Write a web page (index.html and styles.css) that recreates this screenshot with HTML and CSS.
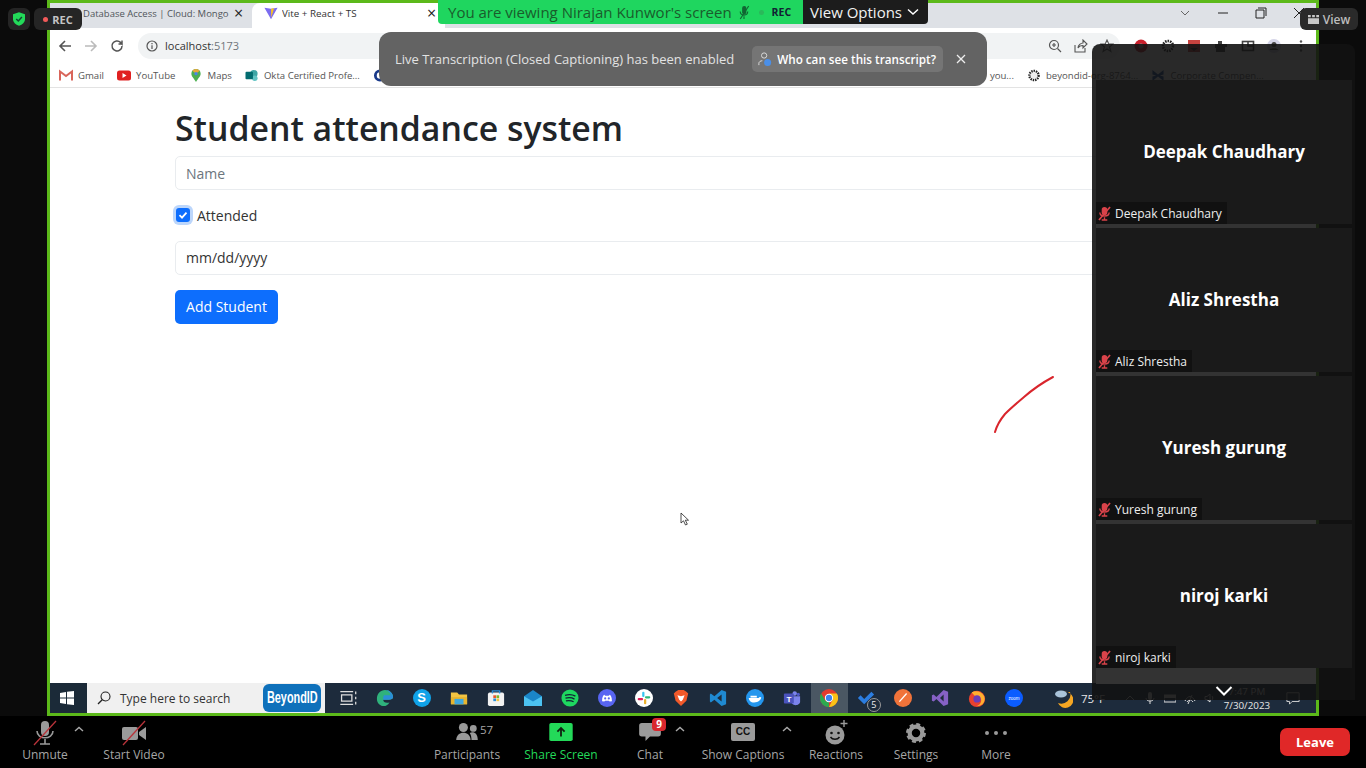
FILE: index.html
```html
<!DOCTYPE html>
<html lang="en">
<head>
  <meta charset="UTF-8" />
  <title>Zoom Meeting</title>
  <link rel="stylesheet" href="styles.css">
</head>
<body>
  <div class="stage">
    <div class="share">
      <!-- chrome tabs -->
      <div class="tabs">
        <div class="tab"><span class="tab-title">Database Access | Cloud: Mongo</span><span class="tab-x">×</span></div>
        <div class="tab active">
          <svg class="vite" viewBox="0 0 16 16"><path d="M0.5 2 8 3.200 15.500 2 8 15z" fill="#7b6cf0"/><path d="M8 3.200 11.500 2.600 8.300 13.500z" fill="#f7c325"/></svg>
          <span class="tab-title">Vite + React + TS</span><span class="tab-x">×</span>
        </div>
        <div class="win-ctrls">
          <svg viewBox="0 0 12 12"><path d="M2 4 6 8 10 4" fill="none" stroke="#666" stroke-width="1"/></svg>
          <svg viewBox="0 0 12 12"><path d="M1 6H11" stroke="#222" stroke-width="1"/></svg>
          <svg viewBox="0 0 12 12"><path d="M3 1H11V9M1 3H9V11H1z" fill="none" stroke="#222" stroke-width="1"/></svg>
          <svg viewBox="0 0 12 12"><path d="M1 1 11 11M11 1 1 11" stroke="#222" stroke-width="1"/></svg>
        </div>
      </div>

      <!-- address bar -->
      <div class="addr">
        <svg class="nav" viewBox="0 0 14 14"><path d="M13 7H2M7 2 2 7l5 5" fill="none" stroke="#555" stroke-width="1.600"/></svg>
        <svg class="nav" viewBox="0 0 14 14"><path d="M1 7H12M7 2l5 5-5 5" fill="none" stroke="#bbb" stroke-width="1.600"/></svg>
        <svg class="nav" viewBox="0 0 14 14"><path d="M12 7a5 5 0 1 1-1.500-3.600L12 5V1.500M12 5H8.500" fill="none" stroke="#555" stroke-width="1.500"/></svg>
        <div class="url">
          <svg class="info" viewBox="0 0 12 12"><circle cx="6" cy="6" r="5" fill="none" stroke="#555" stroke-width="1.200"/><path d="M6 5.200V9M6 3v1.200" stroke="#555" stroke-width="1.200"/></svg>
          <span class="host">localhost</span><span class="port">:5173</span>
          <span class="url-right">
            <svg viewBox="0 0 14 14"><circle cx="6" cy="6" r="4.500" fill="none" stroke="#555" stroke-width="1.200"/><path d="M9.500 9.500 13 13M4 6h4M6 4v4" stroke="#555" stroke-width="1.200"/></svg>
            <svg viewBox="0 0 14 14"><path d="M1 6v7h10V9M4 9c0-3 3-5 5-5V1l4 4-4 4V6.500C7 6.500 5 7 4 9z" fill="none" stroke="#555" stroke-width="1.100"/></svg>
            <svg viewBox="0 0 14 14"><path d="M7 1l1.800 4H13L9.600 8l1.300 4.500L7 10l-3.900 2.500L4.400 8 1 5h4.200z" fill="none" stroke="#555" stroke-width="1.100"/></svg>
          </span>
        </div>
        <div class="ext">
          <svg viewBox="0 0 14 14"><circle cx="7" cy="7" r="6.500" fill="#c8202c"/><circle cx="7" cy="7" r="2.500" fill="#999"/></svg>
          <svg viewBox="0 0 14 14"><circle cx="7" cy="7" r="5" fill="#eee" stroke="#222" stroke-width="2.500" stroke-dasharray="1.500 1"/></svg>
          <svg viewBox="0 0 14 14"><rect x="1" y="1" width="12" height="12" fill="#c8433f"/><path d="M3 9h8l-4 3z" fill="#222"/></svg>
          <svg viewBox="0 0 14 14"><path d="M1 5h3V2h4v3h5v3h-2v5H2V9H1z" fill="#444"/></svg>
          <svg viewBox="0 0 14 14"><rect x="1.500" y="2.500" width="11" height="9" fill="none" stroke="#444" stroke-width="1.600"/><path d="M7 2.500V7H12" fill="none" stroke="#444" stroke-width="1.600"/></svg>
          <svg viewBox="0 0 14 14"><circle cx="7" cy="7" r="7" fill="#d5d5e8"/><circle cx="7" cy="5.500" r="2.500" fill="#444"/><path d="M2.500 11c1-2.500 8-2.500 9 0z" fill="#444"/></svg>
          <svg viewBox="0 0 14 14"><circle cx="7" cy="2.500" r="1.200" fill="#555"/><circle cx="7" cy="7" r="1.200" fill="#555"/><circle cx="7" cy="11.500" r="1.200" fill="#555"/></svg>
        </div>
      </div>

      <!-- bookmarks -->
      <div class="marks">
        <span class="mark"><svg viewBox="0 0 14 12"><path d="M1 11V2l6 4.500L13 2v9" fill="none" stroke="#d9655a" stroke-width="2"/></svg>Gmail</span>
        <span class="mark"><svg viewBox="0 0 14 12"><rect y="1" width="14" height="10" rx="2.500" fill="#e02020"/><path d="M5.500 3.500 9.500 6l-4 2.500z" fill="#fff"/></svg>YouTube</span>
        <span class="mark"><svg viewBox="0 0 12 14"><path d="M6 14C4 10 1 8 1 5a5 5 0 0 1 10 0c0 3-3 5-5 9z" fill="#4caf50"/><path d="M2 2a5 5 0 0 1 8 0L6 5z" fill="#e9a83a"/><circle cx="6" cy="5" r="1.800" fill="#4a86e8"/></svg>Maps</span>
        <span class="mark"><svg viewBox="0 0 14 14"><circle cx="9" cy="5" r="4" fill="#3fa6a6"/><circle cx="10" cy="10" r="3" fill="#62c4c4"/><rect x="0" y="3" width="8" height="8" rx="1" fill="#036c70"/></svg>Okta Certified Profe...</span>
        <span class="mark-gap"><svg viewBox="0 0 14 14"><circle cx="7" cy="7" r="5" fill="none" stroke="#1a3a8a" stroke-width="3"/></svg></span>
        <span class="mark faint">you...</span>
        <span class="mark"><svg viewBox="0 0 14 14"><circle cx="7" cy="7" r="5" fill="#eee" stroke="#222" stroke-width="2.500" stroke-dasharray="1.500 1"/></svg>beyondid-org-8764...</span>
        <span class="mark"><svg viewBox="0 0 14 14"><path d="M1 1 7 6 13 1v5L9 7l4 1v5L7 8l-6 5V8l4-1-4-1z" fill="#1a4a9a"/></svg>Corporate Compen...</span>
      </div>

      <!-- the app being shared -->
      <main class="page">
        <h1>Student attendance system</h1>
        <input class="field" type="text" placeholder="Name">
        <label class="check">
          <span class="check-box"><svg viewBox="0 0 14 14"><path d="M3.500 7.200 6 9.600 10.500 4.600" fill="none" stroke="#fff" stroke-width="1.800"/></svg></span>
          Attended
        </label>
        <div class="field date">mm/dd/yyyy</div>
        <button class="add">Add Student</button>

        <svg class="scribble" viewBox="0 0 60 58"><path d="M1 57C3 50 6 45 11 39 17 33 23 28 30 22 38 15 46 9 59 2" fill="none" stroke="#d9252c" stroke-width="2" stroke-linecap="round"/></svg>
        <svg class="pointer" viewBox="0 0 10 14"><path d="M1 1V11L3.500 8.800 5.500 13 7.300 12.200 5.300 8.200H8.500z" fill="#fff" stroke="#222" stroke-width="0.800"/></svg>
      </main>

      <!-- windows taskbar -->
      <div class="taskbar">
        <div class="start"><svg viewBox="0 0 14 14"><path d="M0 2 6 1V6.500H0zM7 .8 14 0V6.500H7zM0 7.500H6V13L0 12zM7 7.500H14V14L7 13.200z" fill="#fff"/></svg></div>
        <div class="search">
          <svg viewBox="0 0 14 14"><circle cx="8.500" cy="5.500" r="4.500" fill="none" stroke="#222" stroke-width="1.100"/><path d="M5.200 8.800 1 13" stroke="#222" stroke-width="1.300"/></svg>
          <span class="search-text">Type here to search</span>
          <span class="beyond"><span class="beyond-text">BeyondID</span></span>
        </div>
        <div class="apps">
          <span class="app"><svg viewBox="0 0 14 14"><path d="M1 2H11M1 12H11M2 4.500H10V9.500H2zM13 2v2M13 6v2M13 10v2" fill="none" stroke="#ddd" stroke-width="1"/></svg></span>
          <span class="app"><svg viewBox="0 0 20 20"><path d="M1 11C1 5 5 1 10 1c5.500 0 9 4 9 8 0 2-2 3-5 3H8c0 3 3 4 7 3-2 3-4 4-6 4-4 0-8-3-8-8z" fill="#2fb27c"/><path d="M8 12h6c3 0 5-1 5-3 0-4-3.500-8-9-8 4 1 6 3 6 6H9c-1 1-1 3-1 5z" fill="#2b8fd8"/></svg></span>
          <span class="app"><span class="disc sky">S</span></span>
          <span class="app"><svg viewBox="0 0 20 20"><path d="M1 4H8L10 6H19V17H1z" fill="#f4c542"/><rect x="1" y="9" width="18" height="8" fill="#e8b52f"/><rect x="5" y="11" width="10" height="6" fill="#3fa9e0"/></svg></span>
          <span class="app"><svg viewBox="0 0 20 20"><rect x="1" y="4" width="18" height="15" rx="2" fill="#f2f2f2"/><path d="M6 5V2h8v3" fill="none" stroke="#2b8fd8" stroke-width="1.500"/><rect x="7" y="7" width="3" height="3" fill="#e8572f"/><rect x="10.500" y="7" width="3" height="3" fill="#7ab82f"/><rect x="7" y="10.500" width="3" height="3" fill="#2b8fd8"/><rect x="10.500" y="10.500" width="3" height="3" fill="#f4c542"/></svg></span>
          <span class="app"><svg viewBox="0 0 20 20"><path d="M0 8 10 1 20 8V19H0z" fill="#1b86c8"/><path d="M0 8 10 14 20 8V19H0z" fill="#4cc2f1"/></svg></span>
          <span class="app"><svg viewBox="0 0 20 20"><circle cx="10" cy="10" r="9.500" fill="#1ed760"/><path d="M4.500 7C8 6 12.500 6 16 8M5 10.200c3-.8 7-.7 10 1M5.500 13.200c3-.6 6-.4 8.500 1" fill="none" stroke="#123" stroke-width="1.500"/></svg></span>
          <span class="app"><svg viewBox="0 0 20 20"><circle cx="10" cy="10" r="10" fill="#5865f2"/><path d="M4.500 13.500C4.500 9 6 6.500 7 6.500L8 7.500H12L13 6.500C14 6.500 15.500 9 15.500 13.500L13 14 12 13H8L7 14z" fill="#fff"/><circle cx="8" cy="10.500" r="1.200" fill="#5865f2"/><circle cx="12" cy="10.500" r="1.200" fill="#5865f2"/></svg></span>
          <span class="app"><svg viewBox="0 0 20 20"><circle cx="10" cy="10" r="10" fill="#fff"/><rect x="8" y="3" width="2.500" height="6" rx="1.200" fill="#36c5f0"/><rect x="11" y="8" width="6" height="2.500" rx="1.200" fill="#2eb67d"/><rect x="10" y="11" width="2.500" height="6" rx="1.200" fill="#ecb22e"/><rect x="3" y="10" width="6" height="2.500" rx="1.200" fill="#e01e5a"/></svg></span>
          <span class="app"><svg viewBox="0 0 20 20"><path d="M4 3 7 1H13L16 3 18 5 16 13 10 19 4 13 2 5z" fill="#f1592a"/><path d="M6 7 10 8 14 7 12 12 10 14 8 12z" fill="#fff"/></svg></span>
          <span class="app"><svg viewBox="0 0 20 20"><path d="M14 1 19 3V17L14 19 6 12 2 15 1 14V6L2 5 6 8z" fill="#1f8ad2"/><path d="M14 6V14L9 10z" fill="#1f2d3d"/></svg></span>
          <span class="app"><svg viewBox="0 0 20 20"><circle cx="10" cy="10" r="10" fill="#2496ed"/><path d="M3 10H14C15 8.500 16 8.500 17 9.500 16.500 12 14 15 9 15 5 15 3.500 13 3 10z" fill="#fff"/><rect x="5" y="7.500" width="7" height="2" fill="#fff"/></svg></span>
          <span class="app"><svg viewBox="0 0 20 20"><circle cx="13" cy="5" r="2.500" fill="#7b83eb"/><circle cx="17" cy="6" r="1.800" fill="#5059c9"/><path d="M9 8H19V14C19 17 16 18 14 18 11 18 9 16 9 14z" fill="#7b83eb"/><rect x="1" y="5" width="11" height="11" rx="1" fill="#4b53bc"/><text class="teams-t" x="6.500" y="14">T</text></svg></span>
          <span class="app on"><svg viewBox="0 0 20 20"><circle cx="10" cy="10" r="10" fill="#e33b2e"/><path d="M10 20A10 10 0 0 1 1.300 5L6 13l4 2z" fill="#2da94f"/><path d="M10 20a10 10 0 0 0 8.700-15H10l4 7z" fill="#fbc116"/><circle cx="10" cy="10" r="4.600" fill="#fff"/><circle cx="10" cy="10" r="3.500" fill="#3b82f0"/></svg></span>
          <span class="app"><svg viewBox="0 0 20 20"><path d="M1 10 4 7 8 11 16 3 19 6 8 17z" fill="#2b7de0"/></svg><span class="todo-count">5</span></span>
          <span class="app"><svg viewBox="0 0 20 20"><circle cx="10" cy="10" r="10" fill="#f0733a"/><path d="M6 14 14 5" stroke="#fff" stroke-width="1.500"/></svg></span>
          <span class="app"><svg viewBox="0 0 20 20"><path d="M14 1 19 3V17L14 19 6 11 3 14 1 13V7L3 6 6 9z" fill="#8661c5"/><path d="M14 6V14L10 10z" fill="#1f2d3d"/></svg></span>
          <span class="app"><svg viewBox="0 0 20 20"><circle cx="10" cy="11" r="9" fill="#e8412f"/><path d="M4 4C8 1 15 2 18 8c2 6-2 11-8 11 5-2 6-7 3-10L8 8z" fill="#ffb02f"/><circle cx="10" cy="11" r="4" fill="#6a3db8"/></svg></span>
          <span class="app"><svg viewBox="0 0 20 20"><circle cx="10" cy="10" r="10" fill="#0b5cff"/><text class="zoom-t" x="10" y="12">zoom</text></svg></span>
        </div>
        <div class="weather">
          <svg viewBox="0 0 20 20"><path d="M9 3A8 8 0 1 1 3 14 9 9 0 0 0 15 3z" transform="translate(2 1)" fill="#f5a623"/><ellipse cx="8" cy="6" rx="6" ry="3.500" fill="#a9c3d9"/></svg>
          <span>75°F</span>
        </div>
        <div class="tray">
          <svg viewBox="0 0 12 12"><path d="M2 8 6 4 10 8" fill="none" stroke="#ddd" stroke-width="1"/></svg>
          <svg viewBox="0 0 12 12"><rect x="4" y="0" width="4" height="8" rx="2" fill="#ddd"/><path d="M2 6c0 4 8 4 8 0M6 9v3" fill="none" stroke="#ddd" stroke-width="1"/></svg>
          <svg viewBox="0 0 12 12"><rect x="0" y="3" width="12" height="7" fill="none" stroke="#ddd" stroke-width="1"/><rect x="0" y="3" width="12" height="3" fill="#ddd"/></svg>
          <svg viewBox="0 0 12 12"><path d="M1 9C4 3 8 3 11 9M3 10C5 7 7 7 9 10M8 3 4 12" fill="none" stroke="#ddd" stroke-width="1"/></svg>
          <svg viewBox="0 0 12 12"><path d="M1 4.500H3L6 2V10L3 7.500H1z" fill="none" stroke="#ddd" stroke-width="1"/><path d="M8 4c1 1 1 3 0 4" fill="none" stroke="#ddd" stroke-width="1"/></svg>
        </div>
        <div class="clock">
          <span class="time">7:47 PM</span>
          <span class="day">7/30/2023</span>
        </div>
        <svg class="notif" viewBox="0 0 16 16"><path d="M1 2H15V12H7L4 15V12H1z" fill="none" stroke="#ddd" stroke-width="1"/></svg>
      </div>
    </div>

    <!-- zoom overlays -->
    <div class="secure">
      <span class="pill shield"><svg viewBox="0 0 14 16"><path d="M7 0 14 2.500V8C14 12 11 14.500 7 16 3 14.500 0 12 0 8V2.500z" fill="#23d959"/><path d="M3.800 8 6.200 10.400 10.400 5.800" fill="none" stroke="#143" stroke-width="1.700"/></svg></span>
      <span class="pill rec"><i class="rec-dot"></i>REC</span>
    </div>

    <div class="banner">
      <span class="banner-text">You are viewing Nirajan Kunwor's screen<svg class="mic-mini" viewBox="0 0 12 16"><rect x="4" y="1" width="4.500" height="9" rx="2.200" fill="#163"/><path d="M2 7c0 5 8 5 8 0M6 12v3" fill="none" stroke="#163" stroke-width="1.200"/><path d="M11 1 2 15" stroke="#163" stroke-width="1.200"/></svg><i class="banner-dot"></i><b>REC</b></span>
      <span class="banner-view">View Options
        <svg viewBox="0 0 12 8"><path d="M1 1.500 6 6l5-4.500" fill="none" stroke="#fff" stroke-width="1.500"/></svg>
      </span>
    </div>

    <div class="toast">
      <span>Live Transcription (Closed Captioning) has been enabled</span>
      <span class="toast-btn">
        <svg viewBox="0 0 16 18"><circle cx="7" cy="5" r="3" fill="none" stroke="#ddd" stroke-width="1.100"/><path d="M1 16v-2c0-2 2-3 4-3" fill="none" stroke="#ddd" stroke-width="1.100"/><circle cx="11" cy="13" r="4" fill="#4a8fe8"/></svg>
        Who can see this transcript?
      </span>
      <svg class="toast-x" viewBox="0 0 10 10"><path d="M1 1 9 9M9 1 1 9" stroke="#eee" stroke-width="1.300"/></svg>
    </div>

    <div class="view-btn">
      <svg viewBox="0 0 12 12"><path d="M0 1H3V3.500H0zM4.500 1H7.500V3.500H4.500zM9 1H12V3.500H9z M0 4.500H12V11H0z" fill="#c8c8c8"/></svg>
      View
    </div>

    <aside class="gallery">
      <div class="tile"><div class="tile-name">Deepak Chaudhary</div><div class="tile-tag"><svg class="mic-red" viewBox="0 0 14 16"><rect x="4" y="1" width="6" height="9" rx="3" fill="#d9434a"/><path d="M2 7c0 5 10 5 10 0M7 12v3M4 15h6" fill="none" stroke="#d9434a" stroke-width="1.500"/><path d="M13 1 1 15" stroke="#d9434a" stroke-width="1.800"/></svg>Deepak Chaudhary</div></div>
      <div class="tile-bar"></div>
      <div class="tile"><div class="tile-name">Aliz Shrestha</div><div class="tile-tag"><svg class="mic-red" viewBox="0 0 14 16"><rect x="4" y="1" width="6" height="9" rx="3" fill="#d9434a"/><path d="M2 7c0 5 10 5 10 0M7 12v3M4 15h6" fill="none" stroke="#d9434a" stroke-width="1.500"/><path d="M13 1 1 15" stroke="#d9434a" stroke-width="1.800"/></svg>Aliz Shrestha</div></div>
      <div class="tile-bar"></div>
      <div class="tile"><div class="tile-name">Yuresh gurung</div><div class="tile-tag"><svg class="mic-red" viewBox="0 0 14 16"><rect x="4" y="1" width="6" height="9" rx="3" fill="#d9434a"/><path d="M2 7c0 5 10 5 10 0M7 12v3M4 15h6" fill="none" stroke="#d9434a" stroke-width="1.500"/><path d="M13 1 1 15" stroke="#d9434a" stroke-width="1.800"/></svg>Yuresh gurung</div></div>
      <div class="tile-bar"></div>
      <div class="tile"><div class="tile-name">niroj karki</div><div class="tile-tag"><svg class="mic-red" viewBox="0 0 14 16"><rect x="4" y="1" width="6" height="9" rx="3" fill="#d9434a"/><path d="M2 7c0 5 10 5 10 0M7 12v3M4 15h6" fill="none" stroke="#d9434a" stroke-width="1.500"/><path d="M13 1 1 15" stroke="#d9434a" stroke-width="1.800"/></svg>niroj karki</div></div>
      <div class="tile-foot"></div>
      <svg class="gallery-down" viewBox="0 0 18 12"><path d="M1.500 2 9 9.500 16.500 2" fill="none" stroke="#fff" stroke-width="2"/></svg>
    </aside>
  </div>

  <!-- zoom toolbar -->
  <footer class="toolbar">
    <div class="tool w-unmute">
      <svg viewBox="0 0 26 26"><rect x="9" y="1" width="8" height="15" rx="4" fill="#9a9a9a"/><path d="M5 11c0 9 16 9 16 0M13 19v5M8 24h10" fill="none" stroke="#9a9a9a" stroke-width="1.600"/><path d="M24 1 2 25" stroke="#b8333a" stroke-width="1.300"/></svg>
      <span>Unmute</span>
      <svg class="caret" viewBox="0 0 10 6"><path d="M1 5 5 1.500 9 5" fill="none" stroke="#aaa" stroke-width="1.400"/></svg>
    </div>
    <div class="tool w-video">
      <svg viewBox="0 0 26 26"><rect x="1" y="7" width="16" height="13" rx="2" fill="#9a9a9a"/><path d="M18 12 25 7V20L18 15z" fill="#9a9a9a"/><path d="M24 1 2 25" stroke="#b8333a" stroke-width="1.300"/></svg>
      <span>Start Video</span>
    </div>
    <div class="tool w-part">
      <svg class="wide" viewBox="0 4 26 20"><circle cx="9" cy="9" r="5" fill="#9a9a9a"/><circle cx="20" cy="10" r="3.800" fill="#9a9a9a"/><path d="M1 23c0-11 16-11 16 0z" fill="#9a9a9a"/><path d="M18 23c0-3-.5-6-2-8 4-2 9 0 9 8z" fill="#9a9a9a"/></svg>
      <span>Participants</span>
      <em class="count">57</em>
    </div>
    <div class="tool w-share">
      <svg class="wide" viewBox="0 0 26 20"><rect width="26" height="20" rx="2" fill="#23d959"/><path d="M13 15V6M9 9.500 13 5.500 17 9.500" fill="none" stroke="#102010" stroke-width="2"/></svg>
      <span class="green">Share Screen</span>
    </div>
    <div class="tool w-chat">
      <svg class="bubble" viewBox="0 0 24 21"><path d="M3 0H21C23 0 24 1 24 3V12C24 14 23 15 21 15H12L7 20V15H3C1 15 0 14 0 12V3C0 1 1 0 3 0z" fill="#9a9a9a"/></svg>
      <span>Chat</span>
      <em class="badge">9</em>
      <svg class="caret" viewBox="0 0 10 6"><path d="M1 5 5 1.500 9 5" fill="none" stroke="#aaa" stroke-width="1.400"/></svg>
    </div>
    <div class="tool w-cc">
      <span class="cc">CC</span>
      <span>Show Captions</span>
      <svg class="caret" viewBox="0 0 10 6"><path d="M1 5 5 1.500 9 5" fill="none" stroke="#aaa" stroke-width="1.400"/></svg>
    </div>
    <div class="tool w-react">
      <svg viewBox="0 0 26 26"><circle cx="12" cy="15" r="9.500" fill="#9a9a9a"/><circle cx="8.500" cy="13" r="1.300" fill="#111"/><circle cx="15.500" cy="13" r="1.300" fill="#111"/><path d="M7.500 17c2 3 7 3 9 0" fill="none" stroke="#111" stroke-width="1.500"/><path d="M21 0V7M17.500 3.500H24.500" stroke="#9a9a9a" stroke-width="1.400"/></svg>
      <span>Reactions</span>
    </div>
    <div class="tool w-set">
      <svg class="gear" viewBox="0 0 26 26"><circle cx="13" cy="13" r="7.500" fill="none" stroke="#9a9a9a" stroke-width="5"/><circle cx="13" cy="13" r="10" fill="none" stroke="#9a9a9a" stroke-width="3.500" stroke-dasharray="4.500 3.350"/></svg>
      <span>Settings</span>
    </div>
    <div class="tool w-more">
      <svg viewBox="0 0 26 26"><circle cx="4" cy="13" r="2" fill="#9a9a9a"/><circle cx="13" cy="13" r="2" fill="#9a9a9a"/><circle cx="22" cy="13" r="2" fill="#9a9a9a"/></svg>
      <span>More</span>
    </div>
    <button class="leave">Leave</button>
  </footer>
</body>
</html>
```

FILE: styles.css
```css
* {
  box-sizing: border-box;
}
html, body {
  margin: 0;
  height: 768px;
  overflow: hidden;
}
body {
  background: #000;
  font-family: "Open Sans", "Noto Sans", sans-serif;
  color: #212529;
}

/* stage and shared screen */
.stage {
  position: relative;
  height: 716px;
  padding: 0 47px;
  background: #0b0b0b;
}
.share {
  height: 716px;
  border: 3px solid #5cb91a;
  display: flex;
  flex-direction: column;
  background: #fff;
}

/* chrome tabs */
.tabs {
  height: 25px;
  background: #dee1e6;
  display: flex;
  align-items: flex-end;
  flex: none;
}
.tab {
  width: 202px;
  height: 25px;
  padding: 0 0 5px 33px;
  display: flex;
  align-items: center;
  font-size: 9.5px;
  color: #50555a;
  border-radius: 0 0 8px 0;
}
.tab-title {
  flex: 1;
  white-space: nowrap;
  overflow: hidden;
}
.tab-x {
  width: 18px;
  font-size: 16px;
  color: #222;
}
.tab.active {
  width: 193px;
  padding-left: 12px;
  background: #fff;
  border-radius: 8px 8px 0 0;
  color: #333;
  font-size: 9.8px;
}
.vite {
  width: 14px;
  height: 14px;
  margin-right: 4px;
}
.win-ctrls {
  margin-left: auto;
  height: 25px;
  display: flex;
  align-items: center;
  gap: 26px;
  padding: 0 11px 5px 0;
}
.win-ctrls svg {
  width: 12px;
  height: 12px;
}

/* address bar */
.addr {
  height: 35px;
  flex: none;
  display: flex;
  align-items: center;
  padding-left: 8px;
  background: #fff;
}
.nav {
  width: 14px;
  height: 14px;
  margin-right: 12px;
}
.url {
  width: 982px;
  height: 26px;
  margin: 0 14px 0 2px;
  background: #f1f3f4;
  border-radius: 13px;
  display: flex;
  align-items: center;
  padding: 0 8px;
  font-size: 11px;
}
.info {
  width: 12px;
  height: 12px;
  margin-right: 7px;
}
.host {
  color: #333;
}
.port {
  color: #70757a;
}
.url-right {
  margin-left: auto;
  display: flex;
  gap: 12px;
  margin-right: -2px;
}
.url-right svg {
  width: 14px;
  height: 14px;
}
.ext {
  display: flex;
  align-items: center;
  gap: 12.7px;
}
.ext svg {
  width: 14px;
  height: 14px;
}

/* bookmarks */
.marks {
  height: 25px;
  flex: none;
  display: flex;
  align-items: center;
  padding-left: 9px;
  gap: 13px;
  background: #fff;
  border-bottom: 1px solid #e3e3e3;
  font-size: 9.6px;
  color: #555;
  white-space: nowrap;
}
.mark {
  display: flex;
  align-items: center;
  gap: 5px;
}
.mark svg, .mark-gap svg {
  width: 14px;
  height: 13px;
  display: block;
}
.mark-gap {
  width: 617px;
}
.mark.faint {
  margin-left: -13px;
}

/* shared page */
.page {
  position: relative;
  flex: 1;
  padding: 16px 125px 0;
  background: #fff;
}
h1 {
  margin: 0 0 4px;
  height: 48px;
  font-size: 33.8px;
  line-height: 48px;
  font-weight: 600;
  font-family: "Open Sans", "Noto Sans", sans-serif;
}
.field {
  display: block;
  width: 100%;
  height: 34px;
  border: 1px solid #e9ecef;
  border-radius: 5px;
  padding: 0 10px;
  font: 14px/32px "Open Sans", "Noto Sans", sans-serif;
  color: #333;
  background: #fff;
}
.field::placeholder {
  color: #6c757d;
  opacity: 1;
}
.check {
  display: flex;
  align-items: center;
  height: 51px;
  font-size: 14px;
  gap: 7px;
  color: #333;
}
.check-box {
  width: 14px;
  height: 14px;
  margin: -1px 0 0 1px;
  background: #0d6efd;
  border-radius: 3px;
  box-shadow: 0 0 0 3px #bcd6fb;
  display: block;
}
.check-box svg {
  display: block;
}
.date {
  margin-bottom: 15px;
}
.add {
  display: block;
  width: 103px;
  height: 34px;
  padding-bottom: 3px;
  background: #0d6efd;
  color: #fff;
  border: 0;
  border-radius: 5px;
  font: 14px "Open Sans", "Noto Sans", sans-serif;
}
.scribble {
  position: absolute;
  left: 944px;
  top: 287px;
  width: 60px;
  height: 58px;
}
.pointer {
  position: absolute;
  left: 630px;
  top: 424px;
  width: 10px;
  height: 14px;
}

/* taskbar */
.taskbar {
  height: 30px;
  flex: none;
  display: flex;
  align-items: center;
  background: #1d2b3c;
  color: #e6e6e6;
}
.start {
  width: 37px;
  height: 30px;
  padding-right: 3px;
  display: flex;
  align-items: center;
  justify-content: center;
  background: #1b2a38;
}
.start svg {
  width: 14px;
  height: 14px;
}
.search {
  width: 238px;
  height: 30px;
  background: #f0f0f0;
  color: #333;
  display: flex;
  align-items: center;
  padding-left: 10px;
  font-size: 12px;
}
.search svg {
  width: 14px;
  height: 14px;
}
.search-text {
  margin-left: 9px;
}
.beyond {
  margin-left: auto;
  margin-right: 4px;
  width: 58px;
  height: 28px;
  background: #0f71bb;
  border-radius: 6px;
  color: #fff;
  display: flex;
  justify-content: center;
  overflow: hidden;
}
.beyond-text {
  flex: none;
  font: 700 16px/28px "Liberation Sans", sans-serif;
  white-space: nowrap;
  transform: scaleX(0.68);
}
.apps {
  display: flex;
  align-items: center;
  margin-left: 1px;
  padding-left: 3px;
}
.app {
  position: relative;
  width: 37.05px;
  height: 30px;
  display: flex;
  align-items: center;
  justify-content: center;
}
.app svg {
  width: 18px;
  height: 18px;
}
.app.on {
  background: #4a5763;
}
.disc {
  width: 18px;
  height: 18px;
  border-radius: 50%;
  text-align: center;
  color: #fff;
  font: 700 13px/18px "Liberation Sans", sans-serif;
}
.sky {
  background: #10a2e8;
}
.teams-t {
  font: 700 9px "Liberation Sans", sans-serif;
  fill: #fff;
  text-anchor: middle;
}
.zoom-t {
  font: 5px "Liberation Sans", sans-serif;
  fill: #fff;
  text-anchor: middle;
}
.todo-count {
  position: absolute;
  right: 4px;
  bottom: 1px;
  width: 14px;
  height: 14px;
  border-radius: 50%;
  background: #1d2b3c;
  border: 1px solid #999;
  color: #eee;
  font-size: 9px;
  line-height: 12px;
  text-align: center;
}
.weather {
  margin-left: 20px;
  display: flex;
  align-items: center;
  gap: 8px;
  font-size: 11.5px;
}
.weather svg {
  width: 20px;
  height: 20px;
}
.tray {
  margin-left: 19px;
  display: flex;
  align-items: center;
  gap: 8px;
}
.tray svg {
  width: 12px;
  height: 12px;
}
.clock {
  margin-left: 1px;
  width: 60px;
  text-align: center;
  display: flex;
  flex-direction: column;
  font-size: 9.8px;
  line-height: 14px;
  padding-top: 1px;
}
.notif {
  width: 14px;
  height: 14px;
  margin-left: 9px;
}

/* zoom overlays */
.secure {
  position: absolute;
  left: 8px;
  top: 8px;
  display: flex;
  gap: 4px;
}
.pill {
  height: 22px;
  border-radius: 6px;
  background: #252525;
  display: flex;
  align-items: center;
  justify-content: center;
}
.shield {
  width: 22px;
}
.shield svg {
  width: 12px;
  height: 14px;
}
.rec {
  width: 48px;
  color: #c4c4c4;
  font-size: 11px;
  font-weight: 700;
  gap: 4px;
}
.rec-dot {
  width: 5px;
  height: 5px;
  border-radius: 50%;
  background: #f25a5a;
}
.banner {
  position: absolute;
  left: 438px;
  top: 0;
  width: 490px;
  height: 24px;
  display: flex;
  border-radius: 0 0 4px 4px;
  overflow: hidden;
}
.banner-text {
  width: 365px;
  background: #1fd65f;
  color: #1a5c2c;
  font-size: 15px;
  line-height: 24px;
  padding-left: 10px;
  display: flex;
  align-items: center;
  white-space: nowrap;
}
.mic-mini {
  width: 12px;
  height: 15px;
  margin-left: 6px;
}
.banner-dot {
  width: 5px;
  height: 5px;
  margin-left: 9px;
  border-radius: 50%;
  background: #2ab95a;
}
.banner-text b {
  margin-left: 8px;
  font-size: 10.5px;
  color: #123;
}
.banner-view {
  flex: 1;
  background: #1c1c1c;
  color: #f2f2f2;
  font-size: 15px;
  line-height: 23px;
  padding-left: 7px;
  display: flex;
  align-items: center;
  gap: 5px;
}
.banner-view svg {
  width: 12px;
  height: 8px;
}
.toast {
  position: absolute;
  left: 379px;
  top: 32px;
  width: 608px;
  height: 54px;
  background: #636363;
  border-radius: 12px;
  color: #e2e2e2;
  font-size: 13px;
  display: flex;
  align-items: center;
  padding-left: 16px;
}
.toast-btn {
  margin-left: 18px;
  width: 191px;
  height: 26px;
  padding-left: 6px;
  background: #757575;
  border-radius: 5px;
  color: #fff;
  display: flex;
  align-items: center;
  gap: 5px;
  font-size: 11.7px;
  font-weight: 600;
  white-space: nowrap;
}
.toast-btn svg {
  width: 14px;
  height: 16px;
}
.toast-x {
  width: 10px;
  height: 10px;
  margin-left: 13px;
}
.view-btn {
  position: absolute;
  left: 1300px;
  top: 8px;
  width: 58px;
  height: 22px;
  background: #2a2a2a;
  border-radius: 6px;
  color: #bdbdbd;
  font-size: 12px;
  font-weight: 600;
  display: flex;
  align-items: center;
  justify-content: center;
  gap: 4px;
}
.view-btn svg {
  width: 11px;
  height: 11px;
}
.gallery {
  position: absolute;
  left: 1092px;
  top: 44px;
  width: 263px;
  height: 656px;
  padding: 36px 3px 0 4px;
  background: rgba(18, 18, 18, 0.9);
  border-radius: 8px 8px 0 0;
}
.tile {
  position: relative;
  height: 144px;
  background: #1a1a1a;
  color: #fff;
}
.tile-name {
  height: 144px;
  padding-bottom: 2px;
  display: flex;
  align-items: center;
  justify-content: center;
  font-size: 17px;
  font-weight: 700;
}
.tile-tag {
  position: absolute;
  left: 0;
  bottom: 0;
  height: 22px;
  padding: 0 5px 0 2px;
  display: flex;
  align-items: center;
  gap: 4px;
  background: #111;
  font-size: 12px;
  color: #eee;
}
.mic-red {
  width: 13px;
  height: 15px;
}
.tile-bar {
  width: 220px;
  height: 4px;
  background: #333;
}
.tile-foot {
  width: 220px;
  height: 16px;
  background: #333;
}
.gallery-down {
  position: absolute;
  left: 123px;
  top: 641px;
  width: 18px;
  height: 12px;
}

/* zoom toolbar */
.toolbar {
  height: 52px;
  display: flex;
  background: #000;
  color: #a6a6a6;
  font-size: 12px;
}
.tool {
  position: relative;
  flex: none;
  height: 52px;
  display: flex;
  flex-direction: column;
  align-items: center;
  padding-top: 4px;
  white-space: nowrap;
}
.tool > svg {
  width: 26px;
  height: 26px;
  margin-bottom: 0;
  flex: none;
}
.tool span:last-of-type {
  line-height: 17px;
}
.w-unmute { width: 90px; }
.w-video { width: 88px; }
.w-part { width: 94px; margin-left: 242px; }
.w-share { width: 94px; }
.w-chat { width: 84px; }
.w-cc { width: 102px; }
.w-react { width: 84px; }
.w-set { width: 76px; }
.w-more { width: 84px; }
.tool > svg.wide {
  width: 24px;
  height: 18px;
  margin: 3px 0 5px;
}
.tool > svg.bubble {
  width: 22px;
  height: 19px;
  margin: 3px 0 4px;
}
.tool > svg.gear {
  width: 22px;
  height: 22px;
  margin: 2px 0;
}
.tool > svg.caret {
  position: absolute;
  top: 10px;
  right: 6px;
  width: 10px;
  height: 6px;
  margin: 0;
}
.w-cc > svg.caret { right: 2px; }
.w-chat > svg.caret { right: 7px; }
.green {
  color: #23d959;
}
.count {
  position: absolute;
  left: 60px;
  top: 6px;
  font-style: normal;
  font-size: 11.5px;
}
.badge {
  position: absolute;
  left: 44px;
  top: 2px;
  width: 14px;
  height: 13px;
  background: #d9272e;
  border-radius: 4px;
  color: #fff;
  font-style: normal;
  font-weight: 700;
  font-size: 10px;
  line-height: 13px;
  text-align: center;
}
.cc {
  width: 24px;
  height: 18px;
  margin: 3px 0 5px;
  background: #9a9a9a;
  border-radius: 2px;
  color: #111;
  font: 700 10px/18px "Liberation Sans", sans-serif;
  text-align: center;
}
.leave {
  margin: 12px 16px 0 auto;
  width: 70px;
  height: 28px;
  background: #e02828;
  border: 0;
  border-radius: 7px;
  color: #fff;
  font: 700 13px "Open Sans", sans-serif;
}
```
